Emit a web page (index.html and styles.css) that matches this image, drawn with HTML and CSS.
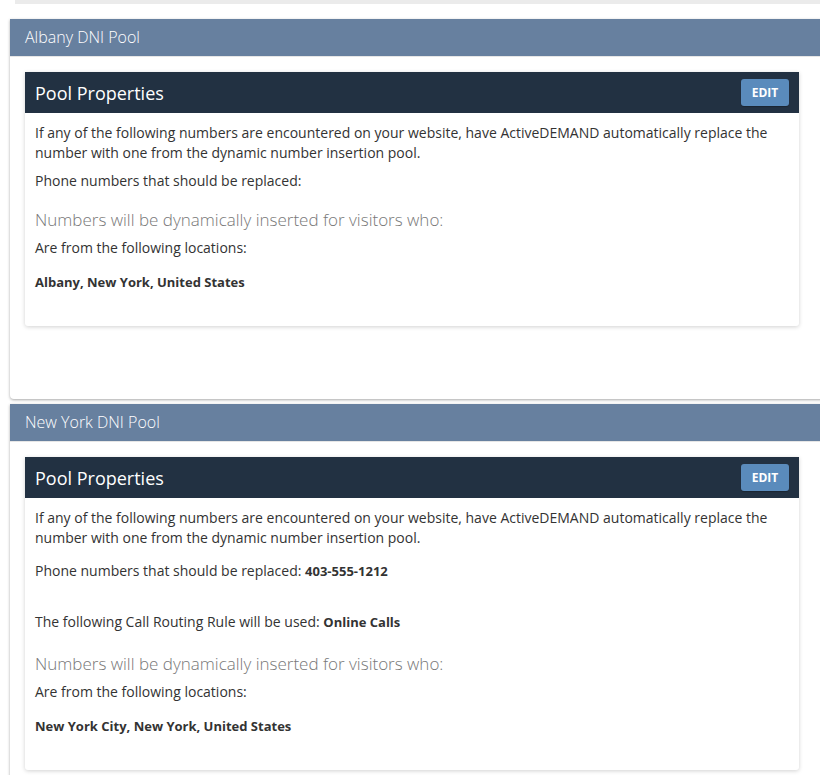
FILE: index.html
```html
<!DOCTYPE html>
<html>
<head>
<meta charset="utf-8">
<link rel="stylesheet" href="styles.css">
</head>
<body>
<div class="page">
  <div class="top-strip"></div>

  <section class="panel first">
    <div class="panel-head">Albany DNI Pool</div>
    <div class="panel-body">
      <div class="card">
        <div class="card-head">
          <span class="card-title">Pool Properties</span>
          <button class="btn-edit">EDIT</button>
        </div>
        <div class="card-body">
          <p class="txt">If any of the following numbers are encountered on your website, have ActiveDEMAND automatically replace the number with one from the dynamic number insertion pool.</p>
          <p class="txt phone">Phone numbers that should be replaced:</p>
          <h4 class="sub">Numbers will be dynamically inserted for visitors who:</h4>
          <p class="txt">Are from the following locations:</p>
          <p class="loc">Albany, New York, United States</p>
        </div>
      </div>
    </div>
  </section>

  <section class="panel second">
    <div class="panel-head">New York DNI Pool</div>
    <div class="panel-body">
      <div class="card">
        <div class="card-head">
          <span class="card-title">Pool Properties</span>
          <button class="btn-edit">EDIT</button>
        </div>
        <div class="card-body">
          <p class="txt">If any of the following numbers are encountered on your website, have ActiveDEMAND automatically replace the number with one from the dynamic number insertion pool.</p>
          <p class="txt phone-filled">Phone numbers that should be replaced: <b class="val">403-555-1212</b></p>
          <p class="txt routing">The following Call Routing Rule will be used: <b class="val">Online Calls</b></p>
          <h4 class="sub">Numbers will be dynamically inserted for visitors who:</h4>
          <p class="txt">Are from the following locations:</p>
          <p class="loc">New York City, New York, United States</p>
        </div>
      </div>
    </div>
  </section>
</div>
</body>
</html>
```

FILE: styles.css
```css
html, body {
  margin: 0;
  padding: 0;
  background: #ffffff;
  overflow: hidden;
}

body {
  font-family: "Open Sans", "Liberation Sans", sans-serif;
  color: #333333;
  font-size: 14px;
  line-height: 20px;
}

.page {
  width: 820px;
  overflow: hidden;
  padding-bottom: 40px;
}

.top-strip {
  margin-left: 15px;
  height: 4px;
  background: #ebebeb;
}

.panel {
  margin-left: 10px;
  width: 830px;
  background: #ffffff;
  border-radius: 0 0 0 4px;
  box-shadow: 0 1px 3px rgba(0, 0, 0, 0.35);
}

.panel.first {
  margin-top: 15px;
}

.panel.second {
  margin-top: 5px;
}

.panel-head {
  height: 37px;
  line-height: 37px;
  background: #67809f;
  color: #ffffff;
  font-size: 16px;
  font-weight: 300;
  padding-left: 15px;
  border-bottom: 1px solid #e6e6e6;
}

.panel-body {
  padding: 15px 0 73px 15px;
}

.card {
  width: 774px;
  background: #ffffff;
  border-radius: 0 0 3px 3px;
  box-shadow: 0 1px 4px rgba(0, 0, 0, 0.18);
}

.card-head {
  height: 41px;
  background: #223142;
  display: flex;
  align-items: center;
  justify-content: space-between;
  padding: 0 10px;
}

.card-title {
  color: #ffffff;
  font-size: 18px;
}

.btn-edit {
  width: 48px;
  height: 27px;
  margin-top: -1px;
  border: none;
  border-radius: 3px;
  background: #5a8bbc;
  color: #ffffff;
  font-family: "Open Sans", "Liberation Sans", sans-serif;
  font-weight: 700;
  font-size: 12px;
  padding: 0;
  box-shadow: 0 1px 1px rgba(0, 0, 0, 0.25);
}

.card-body {
  padding: 10px 10px 35px 10px;
}

.txt {
  margin: 0 0 8px 0;
}

.txt.phone {
  margin-bottom: 19px;
}

.txt.phone-filled {
  margin-top: 13px;
  margin-bottom: 31px;
}

.txt.routing {
  margin-bottom: 22px;
}

.val {
  font-weight: 700;
  font-size: 13px;
}

.sub {
  margin: 0 0 8px 0;
  font-size: 17px;
  line-height: 20px;
  font-weight: 300;
  color: #777777;
}

.loc {
  margin: 15px 0 0 0;
  font-size: 13px;
  line-height: 18px;
  font-weight: 700;
}
```
